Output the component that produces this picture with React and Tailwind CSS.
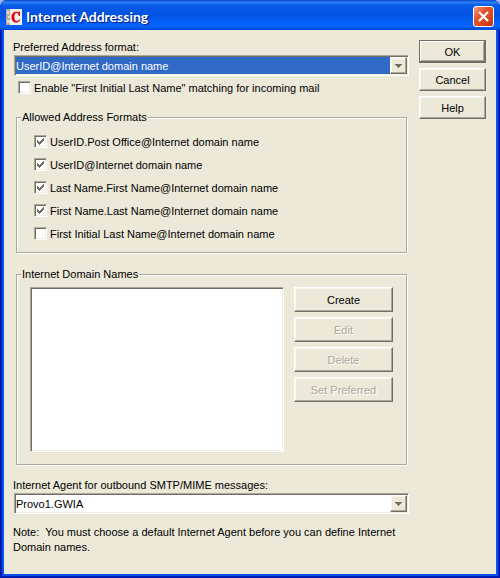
import { useState } from 'react';

const FORMATS = [
  { id: 'post-office', label: 'UserID.Post Office@Internet domain name', on: true },
  { id: 'user', label: 'UserID@Internet domain name', on: true },
  { id: 'last-first', label: 'Last Name.First Name@Internet domain name', on: true },
  { id: 'first-last', label: 'First Name.Last Name@Internet domain name', on: true },
  { id: 'initial-last', label: 'First Initial Last Name@Internet domain name', on: false },
];

// classic bevels
const sunken =
  'border border-t-[#aca899] border-l-[#aca899] border-r-white border-b-white shadow-[inset_1px_1px_0_#716f64,inset_-1px_-1px_0_#f1efe2]';
const raised =
  'border border-t-white border-l-white border-r-[#716f64] border-b-[#716f64] shadow-[inset_-1px_-1px_0_#aca899,inset_1px_1px_0_#f8f6ec] bg-[#ece9d8]';
const raisedDefault =
  'border border-[#716f64] shadow-[inset_-1px_-1px_0_#716f64,inset_1px_1px_0_#fff,inset_-2px_-2px_0_#aca899] bg-[#ece9d8]';

function Checkbox({ id, label, checked, onChange }) {
  return (
    <div className="flex items-center gap-[3px] h-[13px]">
      <span className="grid w-[13px] h-[13px]">
        <input
          id={id}
          type="checkbox"
          checked={checked}
          onChange={onChange}
          className={`appearance-none col-start-1 row-start-1 w-[13px] h-[13px] bg-white ${sunken}`}
        />
        {checked && (
          <svg className="col-start-1 row-start-1 pointer-events-none" width="13" height="13" viewBox="0 0 13 13" shapeRendering="crispEdges">
            <path d="M3 5h1v1h1v1h1v-1h1v-1h1v-1h1v-1h1v3h-1v1h-1v1h-1v1h-1v1h-1v-1h-1v-1h-1z" fill="#716f64" />
          </svg>
        )}
      </span>
      <label htmlFor={id} className="pt-[2px] whitespace-nowrap">{label}</label>
    </div>
  );
}

function Combo({ id, value, selected }) {
  return (
    <div className={`grid h-[21px] ${selected ? 'bg-[#316ac5] text-white' : 'bg-white'} ${sunken}`}>
      <select id={id} className="appearance-none col-start-1 row-start-1 w-full pl-px pt-px outline-none">
        <option>{value}</option>
      </select>
      <span className="col-start-1 row-start-1 justify-self-end self-center mr-px pointer-events-none">
        <span className={`flex items-center justify-center w-[17px] h-[17px] ${raised}`}>
          <svg width="7" height="4" viewBox="0 0 7 4" shapeRendering="crispEdges">
            <path d="M0 0h7v1h-1v1h-1v1h-1v1h-1v-1h-1v-1h-1v-1h-1z" fill="#716f64" />
          </svg>
        </span>
      </span>
    </div>
  );
}

function Button({ children, disabled, primary, className }) {
  return (
    <button
      disabled={disabled}
      className={`w-full pt-px ${primary ? raisedDefault : raised} ${className} disabled:text-[#aca899] disabled:[text-shadow:1px_1px_0_#fff]`}
    >
      {children}
    </button>
  );
}

function Group({ title, className, children }) {
  return (
    <fieldset className={`mx-[2px] border border-[#aca899] shadow-[1px_1px_0_#fff,inset_1px_1px_0_#fff] ${className}`}>
      <legend className="ml-1 px-px bg-[#ece9d8] leading-[15px]">{title}</legend>
      {children}
    </fieldset>
  );
}

export default function App() {
  const [matching, setMatching] = useState(false);
  const [formats, setFormats] = useState(FORMATS);

  const toggle = (id) => setFormats(prev => prev.map(f => (f.id === id ? { ...f, on: !f.on } : f)));

  return (
    <div className="bg-[#a9b4ee]">
      <div className="min-h-screen flex flex-col bg-[#0016a0] rounded-t-[7px] overflow-hidden font-['Liberation_Sans',Arial,sans-serif] text-[11px] leading-[15px] text-black">
        {/* Title bar */}
        <header className="relative flex items-center h-[30px] px-[6px] pt-[3px] bg-[linear-gradient(#0a3fc8_0%,#2b84f5_7%,#0a5ae8_18%,#0353e3_50%,#0560f8_75%,#0663fb_88%,#0046d0_100%)]">
          <svg width="16" height="16" viewBox="0 0 16 16" className="mr-1">
            <rect width="16" height="16" fill="#f4f0ec" />
            <path d="M0 0h4v16H0z" fill="#b4aca0" />
            <path d="M1 2h2v3H1zM2 7h2v2H2zM1 11h3v3H1z" fill="#e8dcc8" />
            <path d="M14 2.500v4.500h-1c-.5-2-1.400-3-2.600-3C9 4 8.400 5.500 8.400 8s.8 4 2.400 4c1.100 0 2-.6 2.700-1.800l.8.600C13.400 12.700 12 13.600 10.200 13.600 7.400 13.600 5.500 11.500 5.500 8.300 5.500 5 7.400 2.700 10 2.700c1 0 1.800.3 2.500.8L13 2.500z" fill="#e00010" />
          </svg>
          <h1 className="flex-1 font-['Lato',sans-serif] font-bold text-[14px] text-white [text-shadow:1px_1px_1px_#0a1883]">Internet Addressing</h1>
          <button aria-label="Close" className="flex items-center justify-center w-[21px] h-[21px] rounded-[3px] border border-white bg-[linear-gradient(135deg,#f0a088_0%,#e4572e_35%,#d8421a_75%,#b03010_100%)]">
            <svg width="11" height="11" viewBox="0 0 11 11" stroke="#fff" strokeWidth="2.200">
              <path d="M1 1l9 9M10 1l-9 9" />
            </svg>
          </button>
        </header>

        <main className="flex-1 flex items-start gap-[10px] mx-1 mb-1 px-[10px] pt-[10px] bg-[#ece9d8] shadow-[0_0_0_2px_#0850f0,0_0_0_3px_#0020c8]">
          <div className="flex-1 min-w-0">
            <label htmlFor="format" className="block -ml-px">Preferred Address format:</label>
            <Combo id="format" value="UserID@Internet domain name" selected />
            <div className="mt-[5px] ml-1">
              <Checkbox
                id="matching"
                label={'Enable "First Initial Last Name" matching for incoming mail'}
                checked={matching}
                onChange={() => setMatching(!matching)}
              />
            </div>

            <Group title="Allowed Address Formats" className="mt-4">
              <div className="flex flex-col gap-[10px] pl-[17px] pt-[10px] pb-3">
                {formats.map(f => (
                  <Checkbox key={f.id} id={f.id} label={f.label} checked={f.on} onChange={() => toggle(f.id)} />
                ))}
              </div>
            </Group>

            <Group title="Internet Domain Names" className="mt-[14px]">
              <div className="flex items-start gap-[10px] px-[13px] pt-[5px] pb-3">
                <div
                  role="listbox"
                  aria-label="Internet Domain Names"
                  className={`flex-1 h-[165px] bg-white ${sunken}`}
                />
                <div className="w-[99px] flex flex-col gap-[5px]">
                  <Button className="h-[25px]">Create</Button>
                  <Button className="h-[25px]" disabled>Edit</Button>
                  <Button className="h-[25px]" disabled>Delete</Button>
                  <Button className="h-[25px]" disabled>Set Preferred</Button>
                </div>
              </div>
            </Group>

            <label htmlFor="agent" className="block -ml-px mt-[13px]">Internet Agent for outbound SMTP/MIME messages:</label>
            <Combo id="agent" value="Provo1.GWIA" />
            <p className="-ml-px mt-[11px]">
              Note:&nbsp; You must choose a default Internet Agent before you can define Internet Domain names.
            </p>
          </div>

          <div className="w-[67px] flex flex-col gap-[5px]">
            <Button className="h-[23px]" primary>OK</Button>
            <Button className="h-[23px]">Cancel</Button>
            <Button className="h-[23px]">Help</Button>
          </div>
        </main>
      </div>
    </div>
  );
}
